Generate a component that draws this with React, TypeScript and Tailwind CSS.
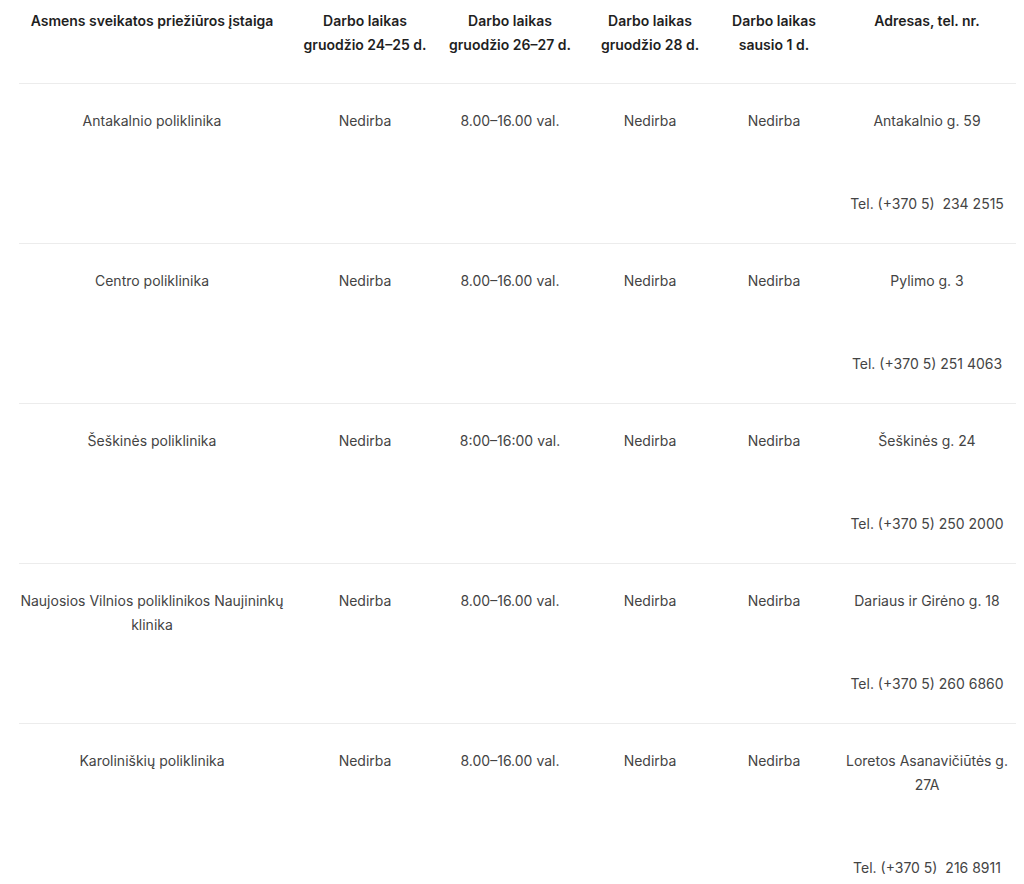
type Row = {
  name: string;
  d1: string;
  d2: string;
  d3: string;
  d4: string;
  address: string;
  phone: string;
};

const rows: Row[] = [
  {
    name: "Antakalnio poliklinika",
    d1: "Nedirba",
    d2: "8.00–16.00 val.",
    d3: "Nedirba",
    d4: "Nedirba",
    address: "Antakalnio g. 59",
    phone: "Tel. (+370 5)\u00a0 234 2515",
  },
  {
    name: "Centro poliklinika",
    d1: "Nedirba",
    d2: "8.00–16.00 val.",
    d3: "Nedirba",
    d4: "Nedirba",
    address: "Pylimo g. 3",
    phone: "Tel. (+370 5) 251 4063",
  },
  {
    name: "Šeškinės poliklinika",
    d1: "Nedirba",
    d2: "8:00–16:00 val.",
    d3: "Nedirba",
    d4: "Nedirba",
    address: "Šeškinės g. 24",
    phone: "Tel. (+370 5) 250 2000",
  },
  {
    name: "Naujosios Vilnios poliklinikos Naujininkų klinika",
    d1: "Nedirba",
    d2: "8.00–16.00 val.",
    d3: "Nedirba",
    d4: "Nedirba",
    address: "Dariaus ir Girėno g. 18",
    phone: "Tel. (+370 5) 260 6860",
  },
  {
    name: "Karoliniškių poliklinika",
    d1: "Nedirba",
    d2: "8.00–16.00 val.",
    d3: "Nedirba",
    d4: "Nedirba",
    address: "Loretos Asanavičiūtės g. 27A",
    phone: "Tel. (+370 5)\u00a0 216 8911",
  },
];

// second line is forced with a <br />, like the original header
const headers: [string, string?][] = [
  ["Asmens sveikatos priežiūros įstaiga"],
  ["Darbo laikas", "gruodžio 24–25 d."],
  ["Darbo laikas", "gruodžio 26–27 d."],
  ["Darbo laikas", "gruodžio 28 d."],
  ["Darbo laikas", "sausio 1 d."],
  ["Adresas, tel. nr."],
];

export default function App() {
  return (
    <div className="min-h-screen bg-white pl-[19px] font-['Inter',_'Liberation_Sans',_sans-serif] text-sm leading-6">
      <table className="w-[997px] table-fixed border-collapse">
        <colgroup>
          <col className="w-[266px]" />
          <col className="w-[160px]" />
          <col className="w-[130px]" />
          <col className="w-[150px]" />
          <col className="w-[98px]" />
          <col className="w-[193px]" />
        </colgroup>
        <thead>
          <tr className="border-b border-[#ececec]">
            {headers.map(([a, b], i) => (
              <th
                key={a + i}
                className={
                  i === 5
                    ? "pb-[26px] pl-[15px] pt-[9px] text-center align-top font-semibold text-[#1f1f1f]"
                    : "pb-[26px] pt-[9px] text-center align-top font-semibold text-[#1f1f1f]"
                }
              >
                {a}
                {b ? (
                  <>
                    <br />
                    {b}
                  </>
                ) : null}
              </th>
            ))}
          </tr>
        </thead>
        <tbody className="text-[#444444]">
          {rows.map((r) => (
            <tr key={r.name} className="border-b border-[#ececec]">
              <td className="pb-[27px] pt-[25px] text-center align-top">{r.name}</td>
              <td className="pb-[27px] pt-[25px] text-center align-top">{r.d1}</td>
              <td className="pb-[27px] pt-[25px] text-center align-top">{r.d2}</td>
              <td className="pb-[27px] pt-[25px] text-center align-top">{r.d3}</td>
              <td className="pb-[27px] pt-[25px] text-center align-top">{r.d4}</td>
              <td className="pb-[27px] pl-[15px] pt-[25px] text-center align-top">
                <p>{r.address}</p>
                <p className="mt-[59px]">{r.phone}</p>
              </td>
            </tr>
          ))}
        </tbody>
      </table>
    </div>
  );
}
